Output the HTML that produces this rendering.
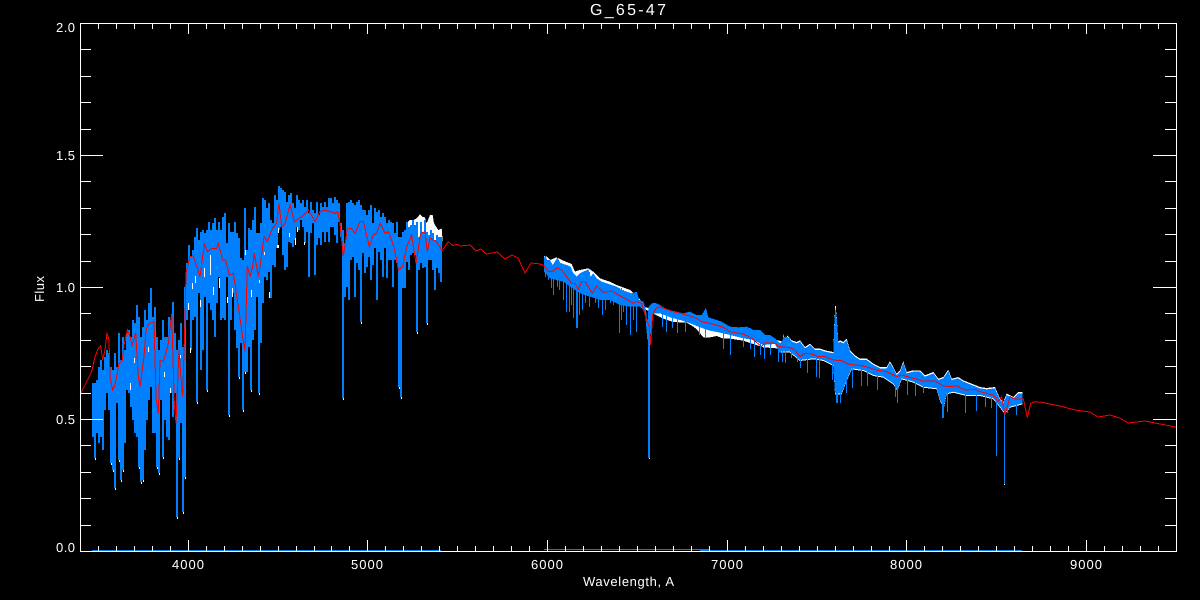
<!DOCTYPE html>
<html>
<head>
<meta charset="utf-8">
<title>G_65-47</title>
<style>
html,body{margin:0;padding:0;background:#000;width:1200px;height:600px;overflow:hidden}
svg{display:block}
text{font-family:"Liberation Sans",sans-serif;fill:#fff;font-size:13px}
</style>
</head>
<body>
<svg width="1200" height="600" viewBox="0 0 1200 600" xmlns="http://www.w3.org/2000/svg" shape-rendering="crispEdges">
<rect width="1200" height="600" fill="#000"/>
<defs>
<path id="b" fill="none" d="M92 383V437M94 383V458M96 380V433M98 367V443M100 360V437M102 370V450M104 357V410M106 350V393M108 353V410M110 367V463M112 370V470M114 353V488M116 367V403M118 333V460M120 360V480M122 337V470M124 350V443M126 333V390M128 330V393M130 337V407M132 320V420M134 323V433M136 305V437M138 317V467M140 337V482M142 327V480M144 310V450M146 320V420M148 303V400M150 288V387M152 317V433M154 307V433M156 337V467M158 350V473M160 340V400M162 320V457M164 337V420M166 337V437M168 317V440M170 320V393M172 302V417M174 333V393M176 350V517M178 340V458M180 323V423M182 347V512M184 287V477M186 263V320M188 245V310M190 257V350M192 250V320M194 237V317M196 228V402M198 240V293M200 232V370M202 230V350M204 233V297M206 230V390M208 222V303M210 230V310M212 223V320M214 218V337M216 230V303M218 222V277M220 230V320M222 217V318M224 213V320M226 243V277M228 223V415M230 232V320M232 232V293M234 222V330M236 233V348M238 238V377M240 258V343M242 260V410M244 208V372M246 250V372M248 228V347M250 230V390M252 220V340M254 207V330M256 233V297M258 233V393M260 223V343M262 198V303M264 200V277M266 208V280M268 203V272M270 220V298M272 223V265M274 195V267M276 200V248M278 186V230M280 188V227M282 190V255M284 192V270M286 202V267M288 195V242M290 193V243M292 203V247M294 208V240M296 195V227M298 200V230M300 203V220M302 200V227M304 207V243M306 200V232M308 213V277M310 202V233M312 210V223M314 213V275M316 202V245M318 215V238M320 203V245M322 207V232M324 202V242M326 207V232M328 198V242M330 198V227M332 203V227M334 197V235M336 200V243M338 203V222M340 223V237M342 230V398M344 243V297M346 203V287M348 202V300M350 200V260M352 203V257M354 205V297M356 202V263M358 200V270M360 205V322M362 210V253M364 210V273M366 215V267M368 210V257M370 205V280M372 223V265M374 208V248M376 212V300M378 210V252M380 217V260M382 213V277M384 217V248M386 223V278M388 220V260M390 222V260M392 223V287M394 233V260M396 222V263M398 237V387M400 237V397M402 232V288M404 230V288M406 222V262M408 227V270M410 225V255M412 220V253M414 225V255M416 222V332M418 237V270M420 222V263M422 232V268M424 220V267M426 232V323M428 235V260M430 230V260M432 233V270M434 240V290M436 235V268M438 237V273M440 237V282"/>
<polygon id="p3" points="42,55 45,45 52,60 60,60 68,75 75,65 82,52 90,68 100,72 110,75 122,80 130,100 140,110 150,100 160,95 175,88 182,110 190,100 200,115 215,125 230,130 245,135 260,140 275,150 290,155 305,160 320,155 328,180 340,185 348,210 352,250 356,200 365,190 375,188 390,195 405,205 420,210 440,215 460,220 480,215 500,225 515,225 528,203 535,232 560,240 575,245 600,260 625,262 650,260 670,270 690,270 705,285 720,285 735,295 750,310 765,290 780,295 780,320 765,320 750,340 735,312 700,315 670,300 640,295 600,285 570,278 540,272 510,262 480,250 450,240 420,232 390,220 370,220 360,300 352,300 345,215 330,200 300,200 270,195 240,180 210,180 180,170 150,160 120,140 100,125 80,120 60,115 42,95"/>
<polygon id="p4" points="0,130 8,130 10,105 15,130 22,110 35,125 50,130 60,125 75,145 90,135 105,150 120,150 135,155 160,160 163,70 166,22 170,50 175,130 180,125 190,130 200,120 210,155 225,170 240,180 260,180 280,195 300,205 320,205 330,188 340,205 350,225 360,215 370,188 380,220 400,215 420,215 435,230 460,220 475,240 490,235 505,213 515,240 535,235 550,245 575,255 600,265 620,268 645,265 660,300 670,310 680,285 700,295 715,280 728,280 728,310 690,320 675,340 660,320 640,295 600,285 560,285 520,275 500,280 492,320 480,300 470,265 430,260 400,245 365,235 352,270 340,250 310,230 280,225 250,210 215,205 200,240 185,280 165,280 160,195 130,180 100,175 60,180 30,155 0,155"/>
</defs>

<!-- white spectrum -->
<g transform="translate(260 180) scale(.33333)" fill="#fff">
<polygon points="440,130 450,120 460,120 470,115 480,103 487,110 495,112 500,130 510,105 518,105 522,130 535,150 545,145 548,185 440,200"/>
</g>
<g transform="translate(530 240) scale(.33333)" fill="#fff">
<polygon points="42,48 50,50 60,60 80,52 100,62 125,72 135,95 150,90 175,85 190,95 210,115 240,125 260,135 300,150 330,178 340,200 780,310 780,325 740,325 700,322 640,302 600,296 580,296 560,288 540,292 520,292 500,268 490,260 470,248 430,246 400,236 380,226 340,205 320,180 200,150 42,90"/>
</g>
<g transform="translate(780 300) scale(.33333)" fill="#fff">
<use href="#p4" transform="translate(0 -4)"/>
<use href="#p4" transform="translate(0 3)"/>
<rect x="165" y="18" width="3" height="10"/>
</g>

<!-- blue spectrum -->
<g transform="translate(1 0)"><use href="#b" stroke="#0080ff" stroke-width="2"/></g>
<g transform="translate(530 240) scale(.33333)" fill="#0080ff"><use href="#p3"/></g>
<g transform="translate(780 300) scale(.33333)" fill="#0080ff"><use href="#p4"/></g>
<g fill="#0080ff">
<rect x="545" y="260" width="1" height="17"/><rect x="548" y="262" width="1" height="18"/><rect x="551" y="263" width="1" height="25"/><rect x="553" y="265" width="1" height="30"/><rect x="557" y="260" width="1" height="27"/><rect x="559" y="265" width="1" height="25"/><rect x="563" y="267" width="1" height="33"/><rect x="566" y="267" width="1" height="45"/><rect x="569" y="268" width="1" height="44"/><rect x="571" y="272" width="1" height="33"/><rect x="573" y="275" width="1" height="43"/><rect x="576" y="278" width="2" height="50"/><rect x="579" y="275" width="1" height="40"/><rect x="582" y="273" width="1" height="37"/><rect x="585" y="272" width="1" height="31"/><rect x="589" y="272" width="1" height="35"/><rect x="592" y="277" width="1" height="18"/><rect x="595" y="277" width="1" height="26"/><rect x="598" y="280" width="1" height="28"/><rect x="602" y="283" width="1" height="32"/><rect x="605" y="285" width="1" height="25"/><rect x="610" y="287" width="1" height="16"/><rect x="613" y="287" width="1" height="18"/><rect x="619" y="288" width="1" height="45"/><rect x="621" y="288" width="1" height="32"/><rect x="623" y="290" width="1" height="22"/><rect x="626" y="293" width="1" height="32"/><rect x="630" y="295" width="1" height="40"/><rect x="633" y="293" width="1" height="27"/><rect x="636" y="293" width="1" height="39"/>
<rect x="662" y="307" width="1" height="20"/><rect x="666" y="310" width="1" height="22"/><rect x="672" y="312" width="1" height="16"/><rect x="677" y="313" width="1" height="20"/><rect x="685" y="315" width="1" height="17"/><rect x="699" y="317" width="1" height="18"/><rect x="705" y="318" width="1" height="19"/><rect x="723" y="323" width="1" height="26"/><rect x="730" y="328" width="1" height="27"/><rect x="743" y="328" width="1" height="19"/><rect x="750" y="328" width="1" height="21"/><rect x="754" y="332" width="1" height="25"/><rect x="760" y="332" width="1" height="23"/><rect x="764" y="337" width="1" height="22"/><rect x="770" y="337" width="1" height="18"/><rect x="778" y="343" width="1" height="19"/><rect x="782" y="343" width="1" height="19"/>
<rect x="785" y="343" width="1" height="20"/><rect x="791" y="343" width="1" height="15"/><rect x="797" y="345" width="1" height="17"/><rect x="800" y="343" width="1" height="25"/><rect x="807" y="348" width="1" height="25"/><rect x="816" y="352" width="1" height="25"/><rect x="819" y="352" width="1" height="26"/><rect x="832" y="355" width="1" height="25"/><rect x="836" y="367" width="2" height="36"/><rect x="840" y="367" width="1" height="36"/><rect x="843" y="367" width="1" height="21"/><rect x="846" y="367" width="1" height="26"/><rect x="852" y="357" width="1" height="31"/><rect x="861" y="362" width="1" height="24"/><rect x="867" y="362" width="1" height="24"/><rect x="877" y="367" width="1" height="23"/><rect x="895" y="377" width="1" height="20"/><rect x="897" y="377" width="1" height="26"/><rect x="907" y="375" width="1" height="20"/><rect x="915" y="373" width="1" height="23"/><rect x="923" y="378" width="1" height="15"/><rect x="942" y="380" width="2" height="38"/><rect x="947" y="380" width="1" height="32"/><rect x="965" y="383" width="1" height="30"/><rect x="976" y="388" width="1" height="23"/><rect x="985" y="390" width="1" height="17"/><rect x="991" y="390" width="1" height="18"/><rect x="1007" y="397" width="1" height="16"/><rect x="1016" y="400" width="1" height="15"/>
<rect x="648" y="310" width="2" height="148"/><rect x="996" y="400" width="1" height="56"/><rect x="1004" y="400" width="1" height="84"/>
<rect x="92" y="550" width="349" height="1"/><rect x="544" y="549" width="166" height="1"/><rect x="700" y="550" width="322" height="1"/>
</g>

<!-- white tips and flecks -->
<g fill="#fff">
<rect x="1004" y="484" width="1" height="1"/><rect x="649" y="458" width="1" height="1"/>
<rect x="95" y="458" width="1" height="2"/><rect x="111" y="463" width="1" height="2"/><rect x="113" y="470" width="1" height="2"/><rect x="115" y="488" width="1" height="2"/><rect x="119" y="460" width="1" height="2"/><rect x="121" y="480" width="1" height="2"/><rect x="123" y="470" width="1" height="2"/><rect x="139" y="467" width="1" height="2"/><rect x="141" y="482" width="1" height="2"/><rect x="143" y="480" width="1" height="2"/><rect x="157" y="467" width="1" height="2"/><rect x="159" y="473" width="1" height="2"/><rect x="163" y="457" width="1" height="2"/><rect x="177" y="517" width="1" height="2"/><rect x="179" y="458" width="1" height="2"/><rect x="183" y="512" width="1" height="2"/><rect x="185" y="477" width="1" height="2"/><rect x="197" y="402" width="1" height="2"/><rect x="229" y="415" width="1" height="2"/><rect x="243" y="410" width="1" height="2"/><rect x="207" y="390" width="1" height="2"/><rect x="251" y="390" width="1" height="2"/><rect x="259" y="393" width="1" height="2"/><rect x="343" y="398" width="1" height="2"/><rect x="399" y="387" width="1" height="2"/><rect x="401" y="397" width="1" height="2"/><rect x="361" y="322" width="1" height="2"/><rect x="417" y="332" width="1" height="2"/><rect x="427" y="323" width="1" height="2"/><rect x="239" y="377" width="1" height="2"/><rect x="245" y="372" width="1" height="2"/>
<rect x="204" y="268" width="1" height="9"/><rect x="195" y="276" width="1" height="7"/><rect x="192" y="283" width="1" height="6"/><rect x="210" y="255" width="1" height="20"/><rect x="213" y="287" width="1" height="8"/><rect x="219" y="278" width="1" height="10"/><rect x="227" y="297" width="1" height="6"/><rect x="232" y="288" width="1" height="9"/><rect x="245" y="250" width="1" height="5"/><rect x="251" y="290" width="1" height="7"/><rect x="259" y="280" width="1" height="3"/><rect x="264" y="252" width="1" height="3"/><rect x="269" y="292" width="1" height="6"/><rect x="277" y="245" width="2" height="3"/><rect x="278" y="228" width="1" height="5"/><rect x="289" y="233" width="1" height="4"/><rect x="295" y="238" width="1" height="7"/><rect x="297" y="227" width="1" height="5"/><rect x="304" y="242" width="1" height="3"/>
<rect x="148" y="347" width="1" height="5"/><rect x="134" y="358" width="1" height="5"/><rect x="164" y="372" width="1" height="5"/><rect x="180" y="355" width="1" height="3"/><rect x="190" y="348" width="1" height="5"/><rect x="200" y="300" width="1" height="7"/><rect x="188" y="303" width="1" height="7"/><rect x="130" y="383" width="1" height="7"/><rect x="170" y="388" width="1" height="5"/>
</g>

<!-- red model -->
<g fill="none" stroke="#f00">
<polyline stroke-width="3" transform="translate(70 180) scale(.33333)" points="30,645 45,615 65,575 75,530 85,505 92,497 98,540 105,510 111,458 117,480 120,590 128,630 133,620 140,590 147,550 157,540 163,490 172,450 180,470 187,495 197,458 205,590 210,620 222,530 228,450 236,430 252,425 258,650 265,700 270,540 280,545 295,490 305,400 313,670 318,730 327,510 332,580 338,650 345,420 348,280 360,230 370,228 390,290 403,190 412,215 425,205 440,205 445,190 458,240 467,240 478,285 490,280 505,380 518,470 525,515 532,255 540,290 548,260 553,220 565,290 570,260"/>
<polyline stroke-width="3" transform="translate(260 180) scale(.33333)" points="0,260 12,170 22,185 37,145 50,130 57,70 65,140 75,130 90,75 103,125 125,110 145,90 165,125 180,95 195,90 225,100 233,95 240,130 250,230 262,145 275,145 285,160 300,125 310,125 328,200 340,165 350,160 360,130 375,160 385,155 400,195 410,240 415,270 428,260 440,200 455,165 468,250 482,160 495,155 502,215 510,175 530,185 546,212 565,185 578,197 590,193 600,197"/>
<polyline stroke-width="1" points="460,246 470,245 476,251 481,249 486,254 497,252 505,259 512,255 518,258 525,273 531,263 540,264 543,265"/>
<polyline stroke-width="3" transform="translate(530 240) scale(.33333)" points="40,75 55,95 70,93 80,83 95,90 110,110 125,130 135,130 145,148 155,125 165,125 187,160 200,138 220,157 245,153 265,165 285,175 310,190 320,185 335,190 350,240 358,260 362,315 368,225 378,205 390,200 420,212 470,225 500,235 515,245 540,250 580,262 600,275 640,282 665,295 695,320 705,308 735,310 750,322"/>
<polyline stroke-width="3" transform="translate(780 300) scale(.33333)" points="0,140 30,143 45,150 60,170 75,160 95,162 115,170 135,170 160,180 185,182 205,192 250,198 290,210 320,215 350,230 365,225 400,235 430,243 465,243 490,258 510,260 530,258 555,270 585,268 600,275 640,285 655,305 665,290 675,345 690,290 705,297 730,297 742,352 752,310 765,305 780,307"/>
<polyline stroke-width="1" points="1040,402 1060,406 1075,410 1090,412 1098,417 1110,415 1120,418 1128,423 1145,421 1160,424 1176,427"/>
</g>

<!-- axes -->
<g fill="none" stroke="#fff" stroke-width="1">
<path d="M80.5 23.5H1176.5V551.5H80.5Z"/>
<path d="M98.5 23v6M116.5 23v6M134.5 23v6M152.5 23v6M170.5 23v6M188.5 23v11M206.5 23v6M224.5 23v6M242.5 23v6M260.5 23v6M278.5 23v6M296.5 23v6M314.5 23v6M331.5 23v6M349.5 23v6M367.5 23v11M385.5 23v6M403.5 23v6M421.5 23v6M439.5 23v6M457.5 23v6M475.5 23v6M493.5 23v6M511.5 23v6M529.5 23v6M547.5 23v11M565.5 23v6M583.5 23v6M601.5 23v6M619.5 23v6M637.5 23v6M655.5 23v6M673.5 23v6M691.5 23v6M709.5 23v6M727.5 23v11M745.5 23v6M763.5 23v6M781.5 23v6M799.5 23v6M817.5 23v6M835.5 23v6M853.5 23v6M871.5 23v6M889.5 23v6M906.5 23v11M924.5 23v6M942.5 23v6M960.5 23v6M978.5 23v6M996.5 23v6M1014.5 23v6M1032.5 23v6M1050.5 23v6M1068.5 23v6M1086.5 23v11M1104.5 23v6M1122.5 23v6M1140.5 23v6M1158.5 23v6"/>
<path d="M98.5 551v-5M116.5 551v-5M134.5 551v-5M152.5 551v-5M170.5 551v-5M188.5 551v-11M206.5 551v-5M224.5 551v-5M242.5 551v-5M260.5 551v-5M278.5 551v-5M296.5 551v-5M314.5 551v-5M331.5 551v-5M349.5 551v-5M367.5 551v-11M385.5 551v-5M403.5 551v-5M421.5 551v-5M439.5 551v-5M457.5 551v-5M475.5 551v-5M493.5 551v-5M511.5 551v-5M529.5 551v-5M547.5 551v-11M565.5 551v-5M583.5 551v-5M601.5 551v-5M619.5 551v-5M637.5 551v-5M655.5 551v-5M673.5 551v-5M691.5 551v-5M709.5 551v-5M727.5 551v-11M745.5 551v-5M763.5 551v-5M781.5 551v-5M799.5 551v-5M817.5 551v-5M835.5 551v-5M853.5 551v-5M871.5 551v-5M889.5 551v-5M906.5 551v-11M924.5 551v-5M942.5 551v-5M960.5 551v-5M978.5 551v-5M996.5 551v-5M1014.5 551v-5M1032.5 551v-5M1050.5 551v-5M1068.5 551v-5M1086.5 551v-11M1104.5 551v-5M1122.5 551v-5M1140.5 551v-5M1158.5 551v-5"/>
<path d="M80 49.5h11M80 76.5h11M80 102.5h11M80 129.5h11M80 155.5h23M80 181.5h11M80 208.5h11M80 234.5h11M80 261.5h11M80 287.5h23M80 313.5h11M80 340.5h11M80 366.5h11M80 393.5h11M80 419.5h23M80 445.5h11M80 472.5h11M80 498.5h11M80 525.5h11"/>
<path d="M1176 49.5h-11M1176 76.5h-11M1176 102.5h-11M1176 129.5h-11M1176 155.5h-23M1176 181.5h-11M1176 208.5h-11M1176 234.5h-11M1176 261.5h-11M1176 287.5h-23M1176 313.5h-11M1176 340.5h-11M1176 366.5h-11M1176 393.5h-11M1176 419.5h-23M1176 445.5h-11M1176 472.5h-11M1176 498.5h-11M1176 525.5h-11"/>
</g>

<!-- labels -->
<g shape-rendering="auto" text-rendering="geometricPrecision">
<text x="590" y="15" style="font-size:16px" textLength="76" lengthAdjust="spacing">G_65-47</text>
<text x="56" y="32" textLength="19">2.0</text>
<text x="56" y="160" textLength="19">1.5</text>
<text x="56" y="292" textLength="19">1.0</text>
<text x="56" y="424" textLength="19">0.5</text>
<text x="56" y="552" textLength="19">0.0</text>
<text x="172" y="569" textLength="32">4000</text>
<text x="351" y="569" textLength="32">5000</text>
<text x="531" y="569" textLength="32">6000</text>
<text x="711" y="569" textLength="32">7000</text>
<text x="890" y="569" textLength="32">8000</text>
<text x="1070" y="569" textLength="32">9000</text>
<text x="583" y="586" textLength="91">Wavelength, A</text>
<text transform="translate(44 302) rotate(-90)" x="0" y="0" textLength="26">Flux</text>
</g>
</svg>
</body>
</html>
